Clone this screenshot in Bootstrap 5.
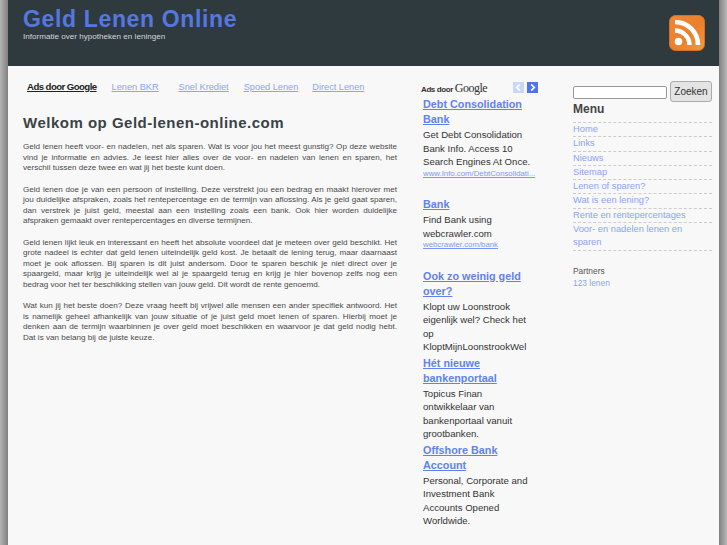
<!DOCTYPE html>
<html lang="nl">
<head>
    <meta charset="UTF-8">
    <meta name="viewport" content="width=device-width, initial-scale=1.0">
    <title>Geld Lenen Online</title>
    <link rel="stylesheet" href="https://cdn.jsdelivr.net/npm/bootstrap@5.3.0/dist/css/bootstrap.min.css">
    <style>
        html, body { height: 100%; }
        body {
            font-family: "Liberation Sans", Arial, sans-serif;
            font-size: 10px;
            color: #484848;
            overflow: hidden;
            background: linear-gradient(90deg, #b4b4b4 0, #808080 8px, #808080 719px, #b8b8b8 727px);
        }
        a { color: #8ba3f6; text-decoration: none; }
        .page-wrap { width: 711px; min-height: 545px; margin-left: 8px; background: #f8f8f8; }
        .site-head { height: 66px; background: #2f3a3e; padding: 6px 14px 0 15px; }
        .site-title { font-size: 23px; line-height: 26px; font-weight: 700; letter-spacing: .65px; color: #5577e2; margin: 0; }
        .site-sub { font-size: 8.1px; line-height: 10px; color: #d4d6d6; margin: 0; }
        .rss-icon { width: 36px; height: 36px; margin-top: 9px; }
        .main-col { width: 374px; margin-left: 15px; }
        .ads-col { width: 122px; margin-left: 26px; }
        .side-col { width: 139px; margin-left: 28px; }
        .top-links { padding: 15px 0 0 4px; height: 47px; line-height: 12px; font-size: 9.2px; }
        .top-links a { text-decoration: underline; }
        .top-links .ads-lbl { color: #222; font-size: 9.6px; font-weight: 700; letter-spacing: -.55px; }
        .link-1 { margin-left: 15px; }
        .link-2 { margin-left: 20px; }
        .link-3 { margin-left: 15px; }
        .link-4 { margin-left: 14px; }
        .page-title { font-size: 15px; line-height: 20px; font-weight: 700; letter-spacing: .5px; color: #3a4245; margin: 0 0 9px; }
        .main-col p { font-size: 8.1px; line-height: 10.5px; margin: 0 0 11px; text-align: justify; color: #4a4a4a; }
        .ads-head { width: 117px; height: 28px; padding-top: 15px; margin-bottom: 3px; margin-left: -2px; }
        .ads-by { font-size: 8px; font-weight: 700; color: #333; letter-spacing: -.4px; white-space: nowrap; }
        .ggl { font-family: "Liberation Serif", serif; font-size: 12px; font-weight: 400; letter-spacing: -.5px; color: #333; }
        .ad-arrow { width: 11px; height: 11px; display: block; }
        .ad-arrow-prev { margin-right: 3px; }
        .ad-item { width: 110px; margin-bottom: 2px; }
        .ad-item.gap-after { margin-bottom: 18.5px; }
        .ad-title { display: block; font-size: 10.8px; line-height: 15px; font-weight: 700; color: #5f82f0; text-decoration: underline; margin-bottom: 1px; }
        .ad-text { font-size: 9.6px; line-height: 13.5px; color: #333; }
        .ad-url { display: block; font-size: 7.8px; line-height: 11px; color: #7c98f4; text-decoration: underline; white-space: nowrap; margin-top: -1px; }
        .search-row { padding-top: 15px; height: 36px; }
        .search-input { width: 94px; height: 13px; margin-top: 5px; background: #fff; border: 1px solid #999; border-radius: 2px; padding: 0; }
        .search-btn { width: 42px; height: 21px; padding: 0; font-size: 10px; line-height: 19px; color: #333; background: #e4e4e4; border: 1px solid #aaa; border-radius: 3px; }
        .menu-title { font-size: 12px; line-height: 15px; font-weight: 700; color: #444; margin: 0 0 5px; }
        .side-menu { border-top: 1px dashed #ccc; list-style: none; margin: 0 0 14px; padding: 0; font-size: 9.3px; }
        .side-menu li { border-bottom: 1px dashed #ccc; padding: 0; line-height: 13.3px; }
        .partners { font-size: 8.4px; line-height: 12px; color: #555; margin: 0; }
        .partners a { display: block; }
    </style>
</head>
<body>

<div class="page-wrap">
    <header class="site-head d-flex justify-content-between">
        <div>
            <h1 class="site-title">Geld Lenen Online</h1>
            <p class="site-sub">Informatie over hypotheken en leningen</p>
        </div>
        <svg class="rss-icon" viewBox="0 0 36 36">
            <defs>
                <linearGradient id="rssbg" x1="0" y1="0" x2="1" y2="1">
                    <stop offset="0" stop-color="#f0883a"/>
                    <stop offset=".55" stop-color="#e9802c"/>
                    <stop offset="1" stop-color="#f39a3f"/>
                </linearGradient>
            </defs>
            <rect x=".5" y=".5" width="35" height="35" rx="6" fill="url(#rssbg)" stroke="#d96f1e"/>
            <circle cx="9.5" cy="26.5" r="3.8" fill="#fff"/>
            <path d="M6 15.5a14.5 14.5 0 0 1 14.5 14.5" fill="none" stroke="#fff" stroke-width="4.4"/>
            <path d="M6 7a23 23 0 0 1 23 23" fill="none" stroke="#fff" stroke-width="4.6"/>
        </svg>
    </header>

    <div class="d-flex">
        <main class="main-col flex-shrink-0">
            <div class="top-links d-flex">
                <a href="#" class="ads-lbl">Ads door Google</a>
                <a href="#" class="link-1">Lenen BKR</a>
                <a href="#" class="link-2">Snel Krediet</a>
                <a href="#" class="link-3">Spoed Lenen</a>
                <a href="#" class="link-4">Direct Lenen</a>
            </div>
            <h2 class="page-title">Welkom op Geld-lenen-online.com</h2>
            <p>Geld lenen heeft voor- en nadelen, net als sparen. Wat is voor jou het meest gunstig? Op deze website vind je informatie en advies. Je leest hier alles over de voor- en nadelen van lenen en sparen, het verschil tussen deze twee en wat jij het beste kunt doen.</p>
            <p>Geld lenen doe je van een persoon of instelling. Deze verstrekt jou een bedrag en maakt hierover met jou duidelijke afspraken, zoals het rentepercentage en de termijn van aflossing. Als je geld gaat sparen, dan verstrek je juist geld, meestal aan een instelling zoals een bank. Ook hier worden duidelijke afspraken gemaakt over rentepercentages en diverse termijnen.</p>
            <p>Geld lenen lijkt leuk en interessant en heeft het absolute voordeel dat je meteen over geld beschikt. Het grote nadeel is echter dat geld lenen uiteindelijk geld kost. Je betaalt de lening terug, maar daarnaast moet je ook aflossen. Bij sparen is dit juist andersom. Door te sparen beschik je niet direct over je spaargeld, maar krijg je uiteindelijk wel al je spaargeld terug en krijg je hier bovenop zelfs nog een bedrag voor het ter beschikking stellen van jouw geld. Dit wordt de rente genoemd.</p>
            <p>Wat kun jij het beste doen? Deze vraag heeft bij vrijwel alle mensen een ander specifiek antwoord. Het is namelijk geheel afhankelijk van jouw situatie of je juist geld moet lenen of sparen. Hierbij moet je denken aan de termijn waarbinnen je over geld moet beschikken en waarvoor je dat geld nodig hebt. Dat is van belang bij de juiste keuze.</p>
        </main>

        <aside class="ads-col flex-shrink-0">
            <div class="ads-head d-flex align-items-center">
                <span class="ads-by me-auto">Ads door <span class="ggl">Google</span></span>
                <svg class="ad-arrow ad-arrow-prev" viewBox="0 0 12 12"><rect width="12" height="12" fill="#c9d7fa"/><path d="M7.5 2.5 4 6l3.5 3.5" fill="none" stroke="#fff" stroke-width="1.8"/></svg>
                <svg class="ad-arrow" viewBox="0 0 12 12"><rect width="12" height="12" fill="#4f74e6"/><path d="M4.5 2.5 8 6l-3.5 3.5" fill="none" stroke="#fff" stroke-width="1.8"/></svg>
            </div>
            <div class="ad-item gap-after">
                <a href="#" class="ad-title">Debt Consolidation Bank</a>
                <div class="ad-text">Get Debt Consolidation Bank Info. Access 10 Search Engines At Once.</div>
                <a href="#" class="ad-url">www.Info.com/DebtConsolidati...</a>
            </div>
            <div class="ad-item gap-after">
                <a href="#" class="ad-title">Bank</a>
                <div class="ad-text">Find Bank using webcrawler.com</div>
                <a href="#" class="ad-url">webcrawler.com/bank</a>
            </div>
            <div class="ad-item">
                <a href="#" class="ad-title">Ook zo weinig geld over?</a>
                <div class="ad-text">Klopt uw Loonstrook eigenlijk wel? Check het op KloptMijnLoonstrookWel</div>
            </div>
            <div class="ad-item">
                <a href="#" class="ad-title">Hét nieuwe bankenportaal</a>
                <div class="ad-text">Topicus Finan ontwikkelaar van bankenportaal vanuit grootbanken.</div>
            </div>
            <div class="ad-item">
                <a href="#" class="ad-title">Offshore Bank Account</a>
                <div class="ad-text">Personal, Corporate and Investment Bank Accounts Opened Worldwide.</div>
            </div>
        </aside>

        <aside class="side-col flex-shrink-0">
            <form class="search-row d-flex justify-content-between">
                <input type="text" class="search-input">
                <button type="button" class="search-btn">Zoeken</button>
            </form>
            <h3 class="menu-title">Menu</h3>
            <ul class="side-menu">
                <li><a href="#">Home</a></li>
                <li><a href="#">Links</a></li>
                <li><a href="#">Nieuws</a></li>
                <li><a href="#">Sitemap</a></li>
                <li><a href="#">Lenen of sparen?</a></li>
                <li><a href="#">Wat is een lening?</a></li>
                <li><a href="#">Rente en rentepercentages</a></li>
                <li><a href="#">Voor- en nadelen lenen en sparen</a></li>
            </ul>
            <p class="partners">Partners<a href="#">123 lenen</a></p>
        </aside>
    </div>
</div>

<script src="https://cdn.jsdelivr.net/npm/bootstrap@5.3.0/dist/js/bootstrap.bundle.min.js"></script>
</body>
</html>
